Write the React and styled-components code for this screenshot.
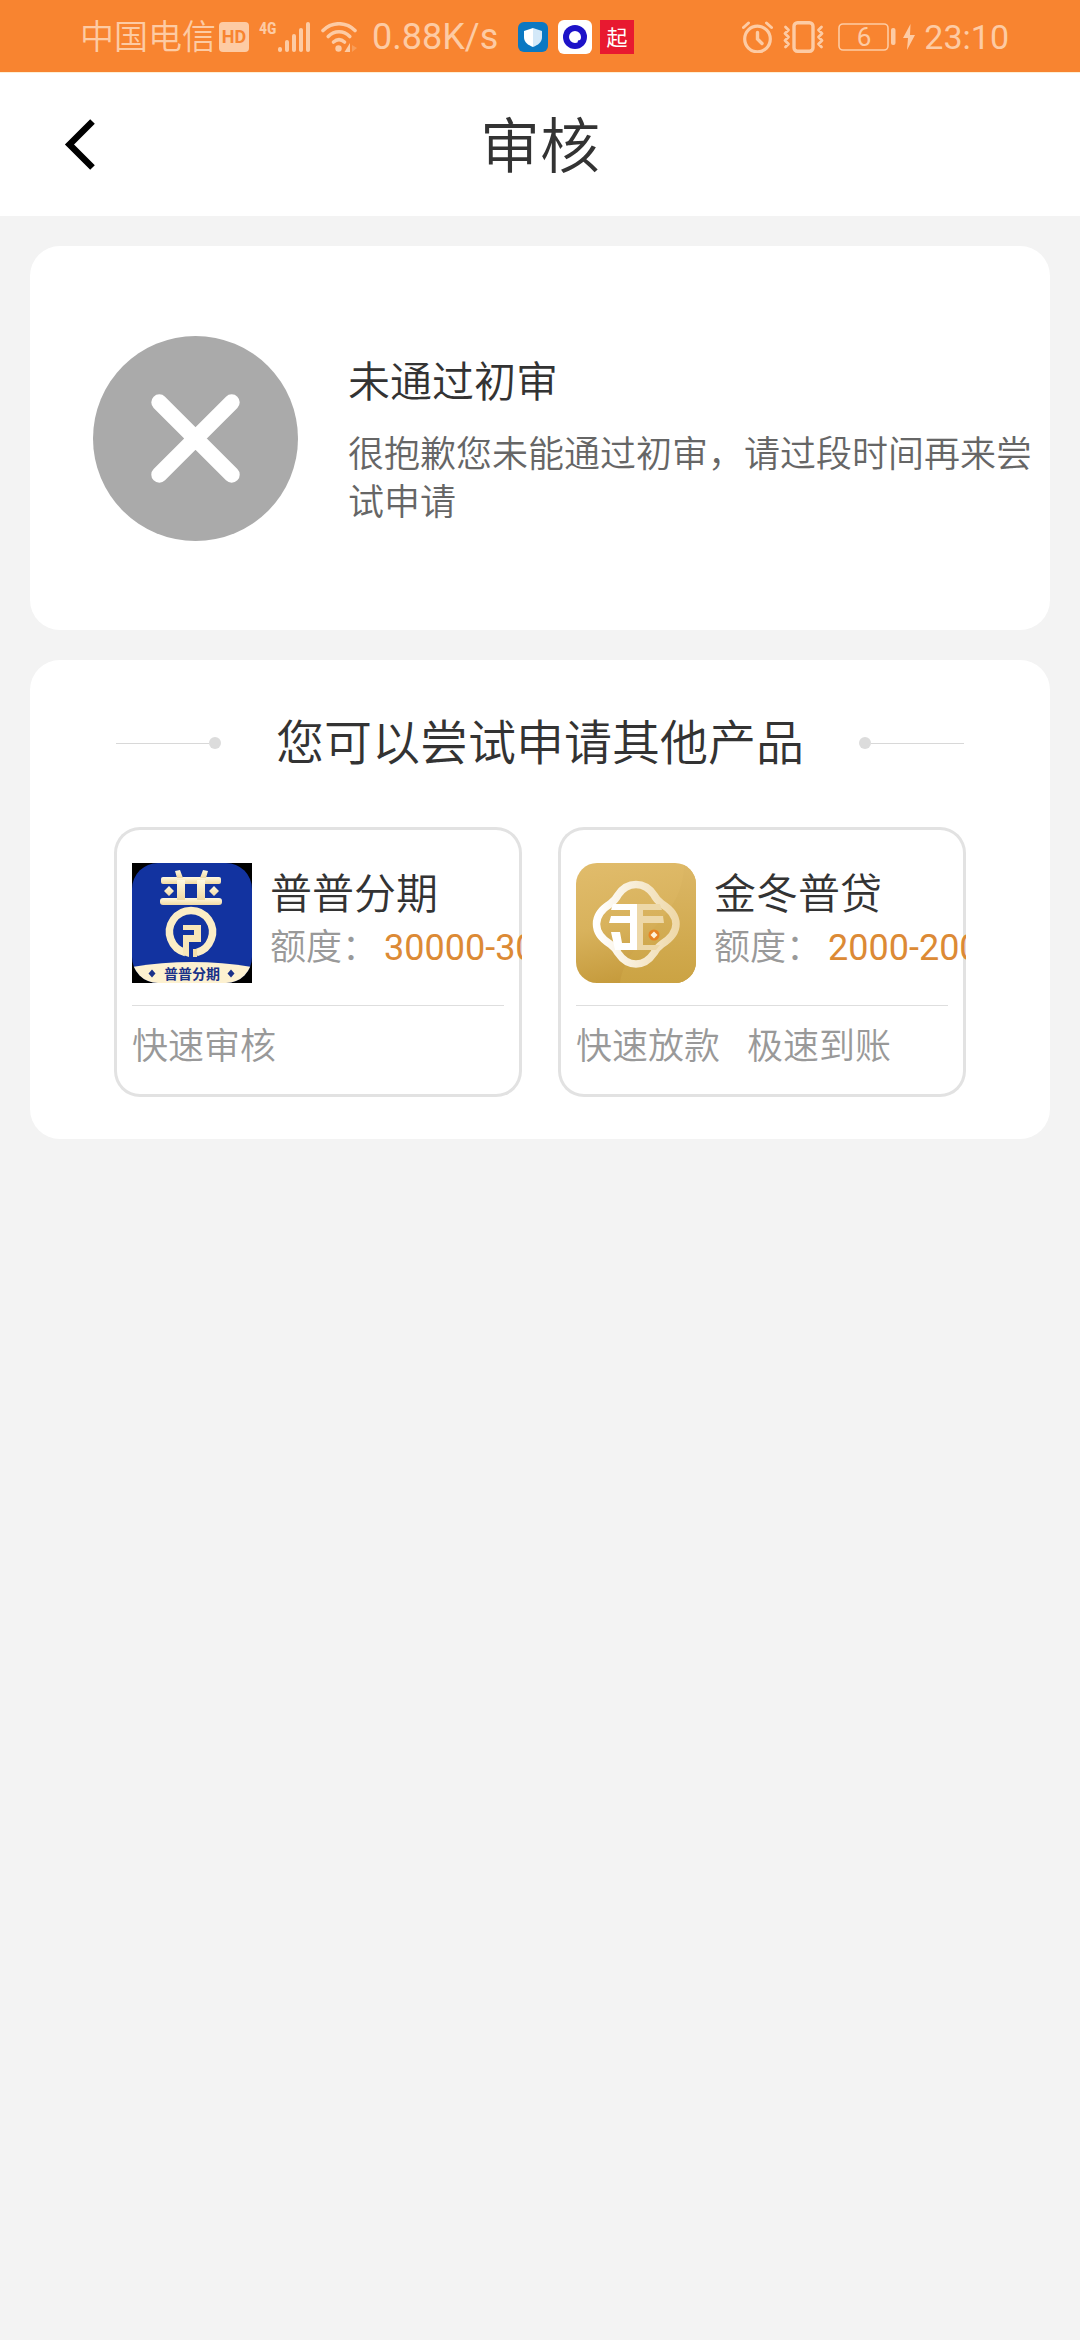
import styled, { createGlobalStyle } from 'styled-components';

const GlobalStyle = createGlobalStyle`
  * {
    box-sizing: border-box;
  }

  body {
    margin: 0;
    background: #f3f3f3;
    color: #333;
    font-family: Roboto, 'Noto Sans CJK SC', sans-serif;
    font-weight: 350;
  }

  h1, h2, h3, p {
    margin: 0;
    font-weight: inherit;
  }

  svg {
    display: block;
    flex-shrink: 0;
  }
`;

const StatusBar = styled.div`
  display: flex;
  align-items: center;
  justify-content: space-between;
  height: 73px;
  padding: 2px 71px 0 80px;
  background: #f88430;
  border-bottom: 1px solid #fdf0d5;
  color: #fdcba4;
`;

const StatusGroup = styled.div`
  display: flex;
  align-items: center;
  gap: ${({ gap }) => gap}px;
`;

const StatusText = styled.span`
  padding: ${({ spaced }) => (spaced ? '0 4px' : '0')};
  font-size: ${({ size }) => size}px;
  line-height: 48px;
  font-weight: ${({ light }) => (light ? 350 : 400)};
  white-space: nowrap;
`;

const HdBadge = styled.span`
  width: 30px;
  height: 30px;
  border-radius: 4px;
  background: #fdcba4;
  color: #f88430;
  font-size: 18px;
  line-height: 30px;
  font-weight: 700;
  text-align: center;
`;

const Network = styled.span`
  align-self: flex-start;
  width: 19px;
  font-family: 'Roboto Condensed', Roboto, sans-serif;
  font-size: 16px;
  line-height: 14px;
  font-weight: 700;
`;

const Header = styled.header`
  display: grid;
  grid-template-columns: 1fr auto 1fr;
  align-items: center;
  height: 143px;
  padding: 0 54px;
  background: #fff;
`;

const BackButton = styled.button`
  justify-self: start;
  padding: 0;
  border: none;
  background: transparent;
  cursor: pointer;
`;

const Title = styled.h1`
  padding-top: 6px;
  font-size: 60px;
  line-height: 84px;
`;

const Main = styled.main`
  display: grid;
  gap: 30px;
  padding: 30px;
`;

const Result = styled.section`
  display: flex;
  align-items: center;
  gap: 50px;
  padding: 90px 15px 89px 63px;
  border-radius: 30px;
  background: #fff;
`;

const ResultBody = styled.div`
  padding-top: 3px;
`;

const ResultTitle = styled.h2`
  margin-bottom: 18px;
  font-size: 42px;
  line-height: 60px;
`;

const ResultText = styled.p`
  color: #666;
  font-size: 36px;
  line-height: 48px;
`;

const Products = styled.section`
  padding: 48px 84px 42px;
  border-radius: 30px;
  background: #fff;
`;

const HeadingRow = styled.div`
  display: flex;
  align-items: center;
  justify-content: space-between;
  margin-bottom: 49px;
  padding: 0 2px;
`;

const Heading = styled.h2`
  padding-top: 2px;
  font-size: 48px;
  line-height: 68px;
`;

const Rule = styled.span`
  display: flex;
  flex-direction: ${({ reverse }) => (reverse ? 'row-reverse' : 'row')};
  align-items: center;
  width: 105px;

  &::before {
    content: '';
    flex: 1;
    height: 1px;
    background: #d8d8d8;
  }

  &::after {
    content: '';
    width: 12px;
    height: 12px;
    border-radius: 50%;
    background: #dcdcdc;
  }
`;

const ProductGrid = styled.div`
  display: grid;
  grid-template-columns: 1fr 1fr;
  gap: 36px;
`;

const ProductCard = styled.a`
  min-width: 0;
  padding: 36px 18px 26px;
  overflow: hidden;
  border-radius: 26px;
  box-shadow: inset 0 0 0 3px #e2e2e2;
  color: inherit;
  text-decoration: none;
`;

const ProductTop = styled.div`
  display: flex;
  gap: 18px;
  padding-bottom: 22px;
  border-bottom: 1px solid #dedede;
`;

const ProductInfo = styled.div`
  padding-top: 5px;
  white-space: nowrap;
`;

const ProductName = styled.h3`
  font-size: 42px;
  line-height: 54px;
`;

const Quota = styled.p`
  color: #999;
  font-size: 36px;
  line-height: 52px;
`;

const Amount = styled.span`
  margin-left: 6px;
  color: #dc8a35;
  font-weight: 400;
`;

const Tags = styled.p`
  display: flex;
  gap: 27px;
  padding-top: 17px;
  color: #999;
  font-size: 36px;
  line-height: 48px;
`;

const SignalIcon = () => (
  <svg width="33" height="30" viewBox="0 0 33 30" fill="currentColor">
    <rect x="0" y="25" width="4" height="5" rx="2" />
    <rect x="7" y="18" width="4" height="12" rx="2" />
    <rect x="14" y="12" width="4" height="18" rx="2" />
    <rect x="21" y="6" width="4" height="24" rx="2" />
    <rect x="28" y="0" width="4" height="30" rx="2" />
  </svg>
);

const WifiIcon = () => (
  <svg width="37" height="30" viewBox="0 0 37 30" fill="none">
    <g stroke="currentColor" strokeWidth="3.6" strokeLinecap="round">
      <path d="M2 8.5C11 -.5 25 -.5 34 8.5" />
      <path d="M7.2 14.5C13.5 8.2 22.5 8.2 28.8 14.5" />
      <path d="M12.5 20C16 17 20 17 23.5 20" />
    </g>
    <circle cx="17.5" cy="26.5" r="3.2" fill="currentColor" />
    <path d="M29 21V30H23.5Z" fill="currentColor" />
    <path d="M31 23V30L36 26Z" fill="currentColor" opacity=".35" />
  </svg>
);

const ShieldAppIcon = () => (
  <svg width="42" height="42" viewBox="0 0 42 42">
    <rect x="6" y="6" width="30" height="30" rx="6" fill="#0a78c2" />
    <path d="M21 12L30 15V21C30 26.500 26 29 21 31Z" fill="#d3e8f8" />
    <path d="M21 12L12 15V21C12 26.500 16 29 21 31Z" fill="#fff" />
  </svg>
);

const RingAppIcon = () => (
  <svg width="42" height="42" viewBox="0 0 42 42">
    <rect x="4" y="4" width="34" height="34" rx="6" fill="#fff" />
    <circle cx="21" cy="21" r="12" fill="#1d12c8" />
    <path
      d="M21 15a6 6 0 0 1 6 6c0 1.500-.5 2.500-1 3l-2 .5-.5 2c-.7.3-1.500.5-2.500.5a6 6 0 0 1 0-12z"
      fill="#fff"
    />
  </svg>
);

const QiAppIcon = () => (
  <svg width="42" height="42" viewBox="0 0 42 42">
    <rect x="4" y="4" width="34" height="34" fill="#e81930" />
    <text x="21" y="28.5" textAnchor="middle" fontSize="21" fontWeight="400" fill="#fff">
      起
    </text>
  </svg>
);

const AlarmIcon = () => (
  <svg width="34" height="32" viewBox="0 0 34 32" fill="none" stroke="currentColor" strokeLinecap="round">
    <circle cx="15.5" cy="18" r="12.8" strokeWidth="3.2" />
    <path d="M15.5 11.5V18L20 22.5" strokeWidth="3.4" />
    <path d="M1.5 6.5L6.5 2M29.5 6.5L24.5 2" strokeWidth="3" />
  </svg>
);

const VibrateIcon = () => (
  <svg width="41" height="32" viewBox="0 0 41 32" fill="none" stroke="currentColor" strokeLinecap="round">
    <rect x="11" y="1.8" width="19" height="28.5" rx="3.5" strokeWidth="3.4" />
    <path
      d="M2.5 6L5.5 9L2 12.5L5.5 16L2 19.5L5.5 23L2.5 26M38.5 6L35.5 9L39 12.5L35.5 16L39 19.5L35.5 23L38.5 26"
      strokeWidth="2.8"
      strokeLinejoin="round"
    />
  </svg>
);

const BatteryIcon = () => (
  <svg width="65" height="28" viewBox="0 0 65 28">
    <rect x="8" y="1" width="49" height="26" rx="4" fill="none" stroke="currentColor" strokeWidth="1.6" />
    <rect x="60" y="5" width="4.5" height="17" rx="2" fill="currentColor" />
    <text x="33" y="22.5" textAnchor="middle" fontSize="26" fontWeight="400" fill="currentColor">
      6
    </text>
  </svg>
);

const BoltIcon = () => (
  <svg width="14" height="26" viewBox="0 0 14 26" fill="currentColor">
    <path d="M7.5 0L0 14H5L4 26L12 11H7Z" />
  </svg>
);

const BackIcon = () => (
  <svg width="54" height="54" viewBox="0 0 54 54" fill="none">
    <path d="M38.5 3.500L15.500 26.500L38.500 49.500" stroke="#000" strokeWidth="6.5" />
  </svg>
);

const RejectedIcon = () => (
  <svg width="205" height="205" viewBox="0 0 204 204">
    <circle cx="102" cy="102" r="102" fill="#aaa" />
    <path d="M66 66L138 138M138 66L66 138" stroke="#fff" strokeWidth="16" strokeLinecap="round" />
  </svg>
);

const PupuLogo = () => (
  <svg width="120" height="120" viewBox="0 0 120 120">
    <defs>
      <linearGradient id="pupuCream" x1="0" y1="0" x2="0" y2="1">
        <stop offset="0" stopColor="#fff9e0" />
        <stop offset="1" stopColor="#f0d9a4" />
      </linearGradient>
      <clipPath id="pupuClip">
        <rect width="120" height="120" rx="26" />
      </clipPath>
    </defs>
    <rect width="120" height="120" fill="#000" />
    <g clipPath="url(#pupuClip)">
      <rect width="120" height="120" fill="#1233a0" />
      <path d="M0 104Q60 94 120 104V120H0Z" fill="#fdf1d0" />
    </g>
    <g fill="url(#pupuCream)">
      <rect x="29" y="14" width="60" height="7" rx="2" />
      <rect x="28" y="35" width="62" height="7" rx="3" />
      <path d="M43 8L48 7L51 15H45ZM76 8L71 7L68 15H74Z" />
      <rect x="45" y="17" width="8" height="20" />
      <rect x="65" y="17" width="8" height="20" />
      <path d="M37 23L42 28L37 33L32 28ZM82 23L87 28L82 33L77 28Z" />
    </g>
    <path
      d="M53.5 89.7A21.5 21.5 0 1 1 64.5 89.7"
      fill="none"
      stroke="#fbedc6"
      strokeWidth="7.5"
    />
    <path d="M51 62H69V79H57V94L51 92V72H62V67H51Z" fill="#f8e6b8" />
    <path d="M61 86H65V94H61Z" fill="#f5dfaa" />
    <g fill="#1a3189">
      <path d="M20 106.5L23.5 110.5L20 114.5L16.5 110.5ZM99 106.5L102.5 110.5L99 114.5L95.5 110.5Z" />
      <text x="60" y="115.5" textAnchor="middle" fontSize="14" fontWeight="700">
        普普分期
      </text>
    </g>
  </svg>
);

const JindongLogo = () => (
  <svg width="120" height="120" viewBox="0 0 120 120">
    <defs>
      <linearGradient id="goldBase" x1=".3" y1="0" x2=".5" y2="1">
        <stop offset="0" stopColor="#e0bb6a" />
        <stop offset=".5" stopColor="#d8b25c" />
        <stop offset="1" stopColor="#c4993a" />
      </linearGradient>
      <linearGradient id="goldSide" x1="0" y1="0" x2="0" y2="1">
        <stop offset="0" stopColor="#dcb766" />
        <stop offset="1" stopColor="#cba343" />
      </linearGradient>
      <linearGradient id="clover" x1="0" y1="0" x2="1" y2="0">
        <stop offset="0" stopColor="#fff" />
        <stop offset="1" stopColor="#efd9aa" />
      </linearGradient>
      <clipPath id="goldClip">
        <rect width="120" height="120" rx="21" />
      </clipPath>
    </defs>
    <g clipPath="url(#goldClip)">
      <rect width="120" height="120" fill="url(#goldBase)" />
      <path d="M108 0C108 60 52 70 44 120H120V0Z" fill="url(#goldSide)" />
    </g>
    <path
      d="M60 21.5C68 21.5 74 26 78 32C80 36 82 38 86 41C94 46 100 52 100 61C100 70 94 76 86 81C82 84 80 86 78 90C74 96 68 101 60 101C52 101 46 96 42 90C40 86 38 84 34 81C26 76 20.5 70 20.5 61C20.5 52 26 46 34 41C38 38 40 36 42 32C46 26 52 21.5 60 21.5Z"
      fill="none"
      stroke="url(#clover)"
      strokeWidth="7.5"
    />
    <path
      d="M37 41H61V87H39L35 69H44L46 80H54V60H33L35 53H54V47H35Z"
      fill="#fff"
    />
    <path d="M61 41H84L86 47H67V53H87L88 60H67V82H84L80 87H61Z" fill="#edd8a8" />
    <circle cx="78" cy="72" r="5.5" fill="#e88324" />
    <path d="M78 68.5L81.5 72L78 75.5L74.5 72Z" fill="#fff3dc" />
  </svg>
);

const products = [
  { name: '普普分期', amount: '30000-300000', tags: ['快速审核'], Logo: PupuLogo },
  { name: '金冬普贷', amount: '2000-200000', tags: ['快速放款', '极速到账'], Logo: JindongLogo },
];

const App = () => (
  <>
    <GlobalStyle />
    <StatusBar>
      <StatusGroup gap={10}>
        <StatusGroup gap={3}>
          <StatusText size={34} light>
            中国电信
          </StatusText>
          <HdBadge>HD</HdBadge>
        </StatusGroup>
        <StatusGroup gap={0}>
          <Network>4G</Network>
          <SignalIcon />
        </StatusGroup>
        <WifiIcon />
        <StatusText size={36} spaced>
          0.88K/s
        </StatusText>
        <StatusGroup gap={0}>
          <ShieldAppIcon />
          <RingAppIcon />
          <QiAppIcon />
        </StatusGroup>
      </StatusGroup>
      <StatusGroup gap={7}>
        <AlarmIcon />
        <VibrateIcon />
        <BatteryIcon />
        <BoltIcon />
        <StatusText size={34}>23:10</StatusText>
      </StatusGroup>
    </StatusBar>
    <Header>
      <BackButton aria-label="返回">
        <BackIcon />
      </BackButton>
      <Title>审核</Title>
    </Header>
    <Main>
      <Result>
        <RejectedIcon />
        <ResultBody>
          <ResultTitle>未通过初审</ResultTitle>
          <ResultText>很抱歉您未能通过初审，请过段时间再来尝试申请</ResultText>
        </ResultBody>
      </Result>
      <Products>
        <HeadingRow>
          <Rule />
          <Heading>您可以尝试申请其他产品</Heading>
          <Rule reverse />
        </HeadingRow>
        <ProductGrid>
          {products.map(({ name, amount, tags, Logo }) => (
            <ProductCard key={name} href="#">
              <ProductTop>
                <Logo />
                <ProductInfo>
                  <ProductName>{name}</ProductName>
                  <Quota>
                    额度：<Amount>{amount}</Amount>
                  </Quota>
                </ProductInfo>
              </ProductTop>
              <Tags>
                {tags.map((tag) => (
                  <span key={tag}>{tag}</span>
                ))}
              </Tags>
            </ProductCard>
          ))}
        </ProductGrid>
      </Products>
    </Main>
  </>
);

export default App;
